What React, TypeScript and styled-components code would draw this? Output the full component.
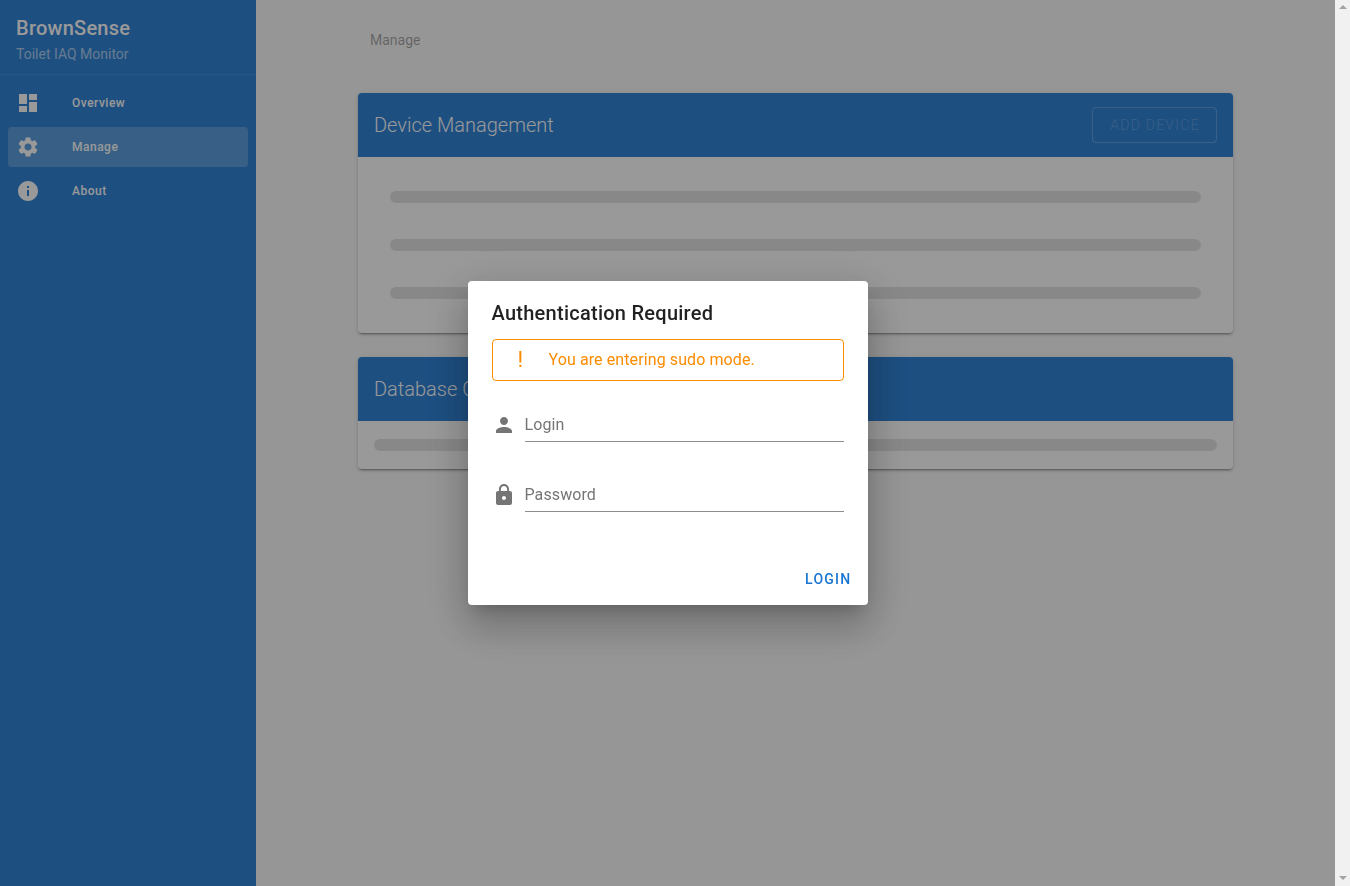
import styled, { createGlobalStyle } from "styled-components";

const GlobalStyle = createGlobalStyle`
  html, body {
    margin: 0;
    height: 100%;
    overflow: hidden;
    background: #fafafa;
    font-family: Roboto, "Liberation Sans", sans-serif;
  }
  #root {
    height: 100%;
  }
  * {
    box-sizing: border-box;
  }
`;

const Shell = styled.div`
  display: flex;
  height: 100vh;
`;

const Sidebar = styled.aside`
  width: 256px;
  flex-shrink: 0;
  background: #3184d8;
  color: #fff;
`;

const Brand = styled.div`
  height: 75px;
  padding: 16px 16px 0;
  border-bottom: 1px solid rgba(255, 255, 255, 0.1);
`;

const BrandName = styled.div`
  font-size: 20px;
  line-height: 24px;
  font-weight: 500;
  letter-spacing: 0.25px;
`;

const BrandSub = styled.div`
  margin-top: 4px;
  font-size: 14px;
  line-height: 20px;
  color: rgba(255, 255, 255, 0.6);
`;

const Nav = styled.nav`
  display: flex;
  flex-direction: column;
  gap: 4px;
  padding: 8px;
`;

const NavItem = styled.a<{ $active?: boolean }>`
  display: flex;
  align-items: center;
  height: 40px;
  padding: 0 8px;
  border-radius: 4px;
  font-size: 12px;
  font-weight: 500;
  letter-spacing: 0.5px;
  background: ${(props) => (props.$active ? "rgba(255, 255, 255, 0.22)" : "transparent")};
  svg {
    margin-right: 32px;
  }
`;

const Icon = styled.svg`
  display: block;
  width: 24px;
  height: 24px;
  flex-shrink: 0;
  fill: currentColor;
`;

const Main = styled.main`
  flex: 1;
  min-width: 0;
  padding: 0 102px;
`;

const Crumb = styled.div`
  padding: 30px 12px 0;
  height: 93px;
  font-size: 14px;
  line-height: 20px;
  color: rgba(0, 0, 0, 0.35);
`;

const Card = styled.section`
  margin-bottom: 24px;
  background: #fff;
  border-radius: 4px;
  overflow: hidden;
  box-shadow: 0 3px 1px -2px rgba(0, 0, 0, 0.2), 0 2px 2px 0 rgba(0, 0, 0, 0.14), 0 1px 5px 0 rgba(0, 0, 0, 0.12);
`;

const CardHeader = styled.header`
  display: flex;
  align-items: center;
  justify-content: space-between;
  height: 64px;
  padding: 0 16px;
  background: #3184d8;
`;

const CardTitle = styled.h2`
  margin: 0;
  font-size: 20px;
  font-weight: 300;
  color: #fff;
`;

const GhostButton = styled.button`
  width: 125px;
  height: 36px;
  padding: 0 0 0 1px;
  background: transparent;
  border: 1px solid rgba(255, 255, 255, 0.24);
  border-radius: 4px;
  font-family: inherit;
  font-size: 14px;
  font-weight: 300;
  letter-spacing: 1.25px;
  color: rgba(255, 255, 255, 0.24);
`;

const CardBody = styled.div<{ $wide?: boolean }>`
  display: flex;
  flex-direction: column;
  gap: 36px;
  padding: ${(props) => (props.$wide ? "34px 32px 34px" : "18px 16px 18px")};
`;

const Skeleton = styled.div`
  height: 12px;
  border-radius: 6px;
  background: rgba(0, 0, 0, 0.11);
`;

const Scrollbar = styled.div`
  position: relative;
  z-index: 2;
  display: flex;
  flex-direction: column;
  justify-content: space-between;
  align-items: center;
  width: 15px;
  flex-shrink: 0;
  padding: 5px 0 6px;
  background: #f1f1f1;
`;

const Arrow = styled.span<{ $up?: boolean }>`
  width: 0;
  height: 0;
  border-left: 4px solid transparent;
  border-right: 4px solid transparent;
  border-top: ${(props) => (props.$up ? "0" : "4px solid #a3a3a3")};
  border-bottom: ${(props) => (props.$up ? "4px solid #a3a3a3" : "0")};
`;

const Backdrop = styled.div`
  position: fixed;
  inset: 0 15px 0 0;
  display: flex;
  align-items: center;
  justify-content: center;
  background: rgba(0, 0, 0, 0.4);
`;

const Dialog = styled.div`
  width: 400px;
  height: 324px;
  display: flex;
  flex-direction: column;
  background: #fff;
  border-radius: 4px;
  box-shadow: 0 11px 15px -7px rgba(0, 0, 0, 0.2), 0 24px 38px 3px rgba(0, 0, 0, 0.14), 0 9px 46px 8px rgba(0, 0, 0, 0.12);
`;

const DialogTitle = styled.h1`
  margin: 0;
  padding: 20px 24px 0;
  font-size: 20px;
  line-height: 24px;
  font-weight: 500;
  letter-spacing: 0.26px;
  color: rgba(0, 0, 0, 0.87);
`;

const Alert = styled.div`
  display: flex;
  align-items: center;
  height: 42px;
  margin: 14px 24px 0;
  padding: 0 0 2px 25px;
  border: 1px solid #fb8c00;
  border-radius: 4px;
  color: #fb8c00;
  font-size: 16px;
  letter-spacing: 0.1px;
`;

const AlertMark = styled.span`
  width: 31px;
  flex-shrink: 0;
  font-size: 22px;
  font-weight: 400;
`;

const Fields = styled.div`
  display: flex;
  flex-direction: column;
  gap: 30px;
  padding: 24px 24px 0;
`;

const Field = styled.label`
  display: flex;
  align-items: center;
  gap: 9px;
  height: 40px;
  color: #757575;
`;

const Input = styled.input`
  flex: 1;
  align-self: flex-start;
  min-width: 0;
  height: 37px;
  padding: 2px 0 0;
  border: 0;
  border-bottom: 1px solid rgba(0, 0, 0, 0.45);
  outline: 0;
  background: transparent;
  font-family: inherit;
  font-size: 16px;
  letter-spacing: 0.1px;
  &::placeholder {
    color: #757575;
    opacity: 1;
  }
`;

const DialogActions = styled.div`
  display: flex;
  justify-content: flex-end;
  margin-top: auto;
  padding: 0 16px 16px;
`;

const TextButton = styled.button`
  padding: 0;
  border: 0;
  background: transparent;
  font-family: inherit;
  font-size: 14px;
  line-height: 20px;
  font-weight: 500;
  letter-spacing: 1.25px;
  color: #1976d2;
`;

const navItems = [
  {
    label: "Overview",
    path: "M3 13h8V3H3v10zm0 8h8v-6H3v6zm10 0h8V11h-8v10zm0-18v6h8V3h-8z",
  },
  {
    label: "Manage",
    active: true,
    path: "M19.14 12.94c.04-.3.06-.61.06-.94 0-.32-.02-.64-.07-.94l2.03-1.58c.18-.14.23-.41.12-.61l-1.92-3.32c-.12-.22-.37-.29-.59-.22l-2.39.96c-.5-.38-1.03-.7-1.62-.94l-.36-2.54c-.04-.24-.24-.41-.48-.41h-3.84c-.24 0-.43.17-.47.41l-.36 2.54c-.59.24-1.13.57-1.62.94l-2.39-.96c-.22-.08-.47 0-.59.22L2.74 8.87c-.12.21-.08.47.12.61l2.03 1.58c-.05.3-.09.63-.09.94s.02.64.07.94l-2.03 1.58c-.18.14-.23.41-.12.61l1.92 3.32c.12.22.37.29.59.22l2.39-.96c.5.38 1.03.7 1.62.94l.36 2.54c.05.24.24.41.48.41h3.84c.24 0 .44-.17.47-.41l.36-2.54c.59-.24 1.13-.56 1.62-.94l2.39.96c.22.08.47 0 .59-.22l1.92-3.32c.12-.22.07-.47-.12-.61l-2.01-1.58zM12 15.6c-1.98 0-3.6-1.62-3.6-3.6s1.62-3.6 3.6-3.6 3.6 1.62 3.6 3.6-1.62 3.6-3.6 3.6z",
  },
  {
    label: "About",
    path: "M12 2C6.48 2 2 6.48 2 12s4.48 10 10 10 10-4.48 10-10S17.52 2 12 2zm1 15h-2v-6h2v6zm0-8h-2V7h2v2z",
  },
];

const personPath =
  "M12 12c2.21 0 4-1.79 4-4s-1.79-4-4-4-4 1.79-4 4 1.79 4 4 4zm0 2c-2.67 0-8 1.34-8 4v2h16v-2c0-2.66-5.33-4-8-4z";
const lockPath =
  "M18 8h-1V6c0-2.76-2.24-5-5-5S7 3.24 7 6v2H6c-1.1 0-2 .9-2 2v10c0 1.1.9 2 2 2h12c1.1 0 2-.9 2-2V10c0-1.1-.9-2-2-2zm-6 9c-1.1 0-2-.9-2-2s.9-2 2-2 2 .9 2 2-.9 2-2 2zm3.1-9H8.9V6c0-1.71 1.39-3.1 3.1-3.1 1.71 0 3.1 1.39 3.1 3.1v2z";

function App() {
  return (
    <>
      <GlobalStyle />
      <Shell>
        <Sidebar>
          <Brand>
            <BrandName>BrownSense</BrandName>
            <BrandSub>Toilet IAQ Monitor</BrandSub>
          </Brand>
          <Nav>
            {navItems.map((item) => (
              <NavItem key={item.label} $active={item.active}>
                <Icon viewBox="0 0 24 24">
                  <path d={item.path} />
                </Icon>
                {item.label}
              </NavItem>
            ))}
          </Nav>
        </Sidebar>
        <Main>
          <Crumb>Manage</Crumb>
          <Card>
            <CardHeader>
              <CardTitle>Device Management</CardTitle>
              <GhostButton disabled>ADD DEVICE</GhostButton>
            </CardHeader>
            <CardBody $wide>
              <Skeleton />
              <Skeleton />
              <Skeleton />
            </CardBody>
          </Card>
          <Card>
            <CardHeader>
              <CardTitle>Database Connection</CardTitle>
            </CardHeader>
            <CardBody>
              <Skeleton />
            </CardBody>
          </Card>
        </Main>
        <Scrollbar>
          <Arrow $up />
          <Arrow />
        </Scrollbar>
      </Shell>
      <Backdrop>
        <Dialog>
          <DialogTitle>Authentication Required</DialogTitle>
          <Alert>
            <AlertMark>!</AlertMark>
            You are entering sudo mode.
          </Alert>
          <Fields>
            <Field>
              <Icon viewBox="0 0 24 24">
                <path d={personPath} />
              </Icon>
              <Input placeholder="Login" />
            </Field>
            <Field>
              <Icon viewBox="0 0 24 24">
                <path d={lockPath} />
              </Icon>
              <Input placeholder="Password" type="password" />
            </Field>
          </Fields>
          <DialogActions>
            <TextButton>LOGIN</TextButton>
          </DialogActions>
        </Dialog>
      </Backdrop>
    </>
  );
}

export default App;
